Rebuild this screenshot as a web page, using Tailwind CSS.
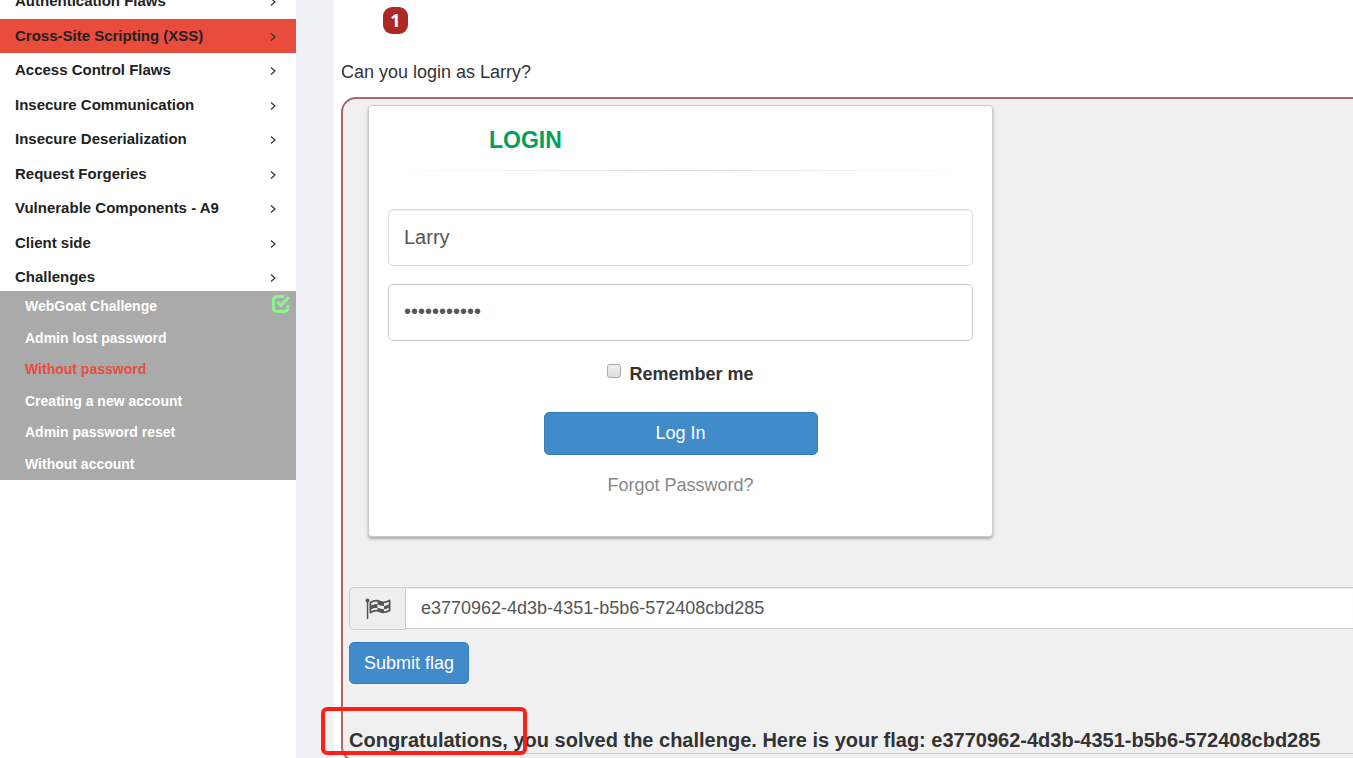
<!DOCTYPE html>
<html lang="en">
<head>
  <meta charset="UTF-8" />
  <meta name="viewport" content="width=device-width, initial-scale=1.0"/>
  <title>WebGoat</title>
  <script src="https://cdn.jsdelivr.net/npm/@tailwindcss/browser@4"></script>
</head>
<body class="bg-[#f0f1f7] text-[#333] text-[18px] font-['Liberation_Sans',Arial,sans-serif] h-screen overflow-hidden flex">

  <!-- Sidebar -->
  <aside class="w-[296px] shrink-0 bg-white overflow-hidden">
    <nav class="-mt-4">
      <ul id="menu" class="h-[310px] flex flex-col justify-between text-[15px] font-bold text-[#222]"></ul>
      <ul id="lessons" class="relative -mt-[3px] h-[189px] bg-[#aaa] flex flex-col text-[14px] font-bold text-white"></ul>
    </nav>
  </aside>

  <!-- Lesson -->
  <main class="ml-[38px] flex-1 min-w-0 bg-white pl-[7px] pt-[7px]">
    <a href="#" class="ml-[42px] w-[25px] h-[27px] rounded-[9px] bg-[#ac2925] text-white font-bold font-['Open_Sans',sans-serif] flex items-center justify-center">1</a>
    <p class="mt-[25px] leading-[26px]">Can you login as Larry?</p>

    <section class="relative mt-3 h-[665px] border-2 border-r-0 border-[#ac6768] rounded-l-[15px] bg-[#f0f0f0] pl-[6px] pt-[6px]">
      <form class="ml-[19px] w-[625px] h-[432px] bg-white border border-[#ccc] rounded-[4px] shadow-[0_2px_3px_#aaa] px-[19px] pt-[19px]">
        <h4 class="pl-[101px] text-[23px] leading-[30px] font-bold text-[#00a05f]">LOGIN</h4>
        <div class="mt-[15px] h-px mx-2 bg-linear-to-r from-transparent via-[#ddd] to-transparent"></div>
        <input type="text" value="Larry" aria-label="Username" class="mt-[38px] block w-full h-[57px] px-[15px] border border-[#ddd] rounded-[5px] text-[20px] text-[#555] shadow-[inset_0_1px_1px_#eee]">
        <input type="password" value="password123" aria-label="Password" class="mt-[18px] block w-full h-[57px] px-[15px] pb-0.5 border border-[#ccc] rounded-[5px] text-[20px] text-[#555]">
        <div class="mt-5 flex justify-center gap-2 leading-[26px]">
          <input id="remember" type="checkbox" class="mt-[3px] appearance-none size-[14px] border border-[#aaa] rounded-[3px] bg-linear-to-b from-[#eee] to-[#ddd]">
          <label for="remember" class="font-bold">Remember me</label>
        </div>
        <button type="button" class="mt-[25px] mx-auto block w-[274px] h-[43px] rounded-[5px] border border-[#357ebd] bg-[#428bca] text-white">Log In</button>
        <a href="#" class="mt-[17px] block text-center leading-[26px] text-[#888]">Forgot Password?</a>
      </form>

      <form class="mt-[50px]">
        <div class="flex h-[43px]">
          <label for="flag" class="w-[57px] border border-[#ccc] rounded-l-[5px] bg-[#eee] flex items-center justify-center" aria-label="Flag">
            <svg class="w-[26px] h-[24px]" viewBox="0 0 26 24" fill="#555">
              <circle cx="2.500" cy="3.500" r="1.900"/>
              <path d="M1.800 3h1.500v19H1.800z"/>
              <path fill="none" stroke="#555" stroke-width="1.800" stroke-linejoin="round" d="M5.400 5.500c3.600-2.300 6.600-2.600 9.600-.9c3 1.500 6 .8 9.600-1.100v10c-3.600 2.200-6.600 2.600-9.600 1c-3-1.500-6-1.200-9.600 1z"/>
              <path d="M5 9.300c3-1.900 5.500-2.300 7.500-1.900v3.600c-2.300-.4-4.800.2-7.500 1.500z"/>
              <path d="M12.500 4c2.500.2 3.800 1.500 6.500 1.600v3.300c-2.700.1-4.500-1.100-6.500-1.500z"/>
              <path d="M12.500 11c2.500.2 4 1.300 6.500 1.300v3c-2.500.3-4.500-1.200-6.500-1.500z"/>
              <path d="M19 8.900c2-.1 3.700-.9 5.500-1.900v3.200c-1.800 1.200-3.500 1.900-5.500 2.100z"/>
            </svg>
          </label>
          <input id="flag" type="text" value="e3770962-4d3b-4351-b5b6-572408cbd285" class="flex-1 min-w-0 h-[42px] px-[15px] border border-l-0 border-r-0 border-[#ccc] bg-white text-[#555] shadow-[inset_0_1px_1px_#eee]">
        </div>
        <button type="button" class="mt-3 w-[120px] h-[42px] rounded-[5px] border border-[#357ebd] bg-[#428bca] text-white">Submit flag</button>
      </form>

      <div class="mt-[43px] border-b border-[#ccc] text-[20px] leading-[26px] font-bold whitespace-nowrap">Congratulations, you solved the challenge. Here is your flag: e3770962-4d3b-4351-b5b6-572408cbd285</div>
      <div class="absolute -left-[22px] top-[608px] w-[206px] h-[48px] border-4 border-[#ff2015] rounded-[6px]"></div>
    </section>
  </main>

  <script>
    const menu = document.getElementById('menu');
    const lessons = document.getElementById('lessons');

    const categories = [
      "Authentication Flaws",
      "Cross-Site Scripting (XSS)",
      "Access Control Flaws",
      "Insecure Communication",
      "Insecure Deserialization",
      "Request Forgeries",
      "Vulnerable Components - A9",
      "Client side",
      "Challenges",
    ];

    categories.forEach((name) => {
      const li = document.createElement('li');
      const active = name === "Cross-Site Scripting (XSS)";
      li.innerHTML = `<a href="#" class="h-[34px] pt-px pl-[15px] pr-5 flex items-center justify-between">${name}
        <svg class="mt-px w-[6px] h-[8px]" viewBox="0 0 6 8" fill="none" stroke="#333" stroke-width="1.2"><path d="M1 .5l4 3.500-4 3.500"/></svg></a>`;
      if (active) li.classList.add('bg-[#e84c3d]');
      menu.appendChild(li);
    });

    const items = [
      { name: "WebGoat Challenge", solved: true },
      { name: "Admin lost password" },
      { name: "Without password", active: true },
      { name: "Creating a new account" },
      { name: "Admin password reset" },
      { name: "Without account" },
    ];

    items.forEach((item) => {
      const li = document.createElement('li');
      li.className = "flex-1 pl-[25px] pr-[6px] flex justify-between leading-[30px]";
      li.innerHTML = `<a href="#">${item.name}</a>`;
      if (item.active) li.classList.add('text-[#e84c3d]');
      if (item.solved) {
        li.innerHTML += `<svg class="mt-1 w-[18px] h-[18px]" viewBox="0 0 18 18" fill="none" stroke="#86f98a" stroke-width="2.8"><path d="M12 1.500H5a3.500 3.500 0 0 0-3.500 3.500v8a3.500 3.500 0 0 0 3.500 3.500h7.500a3.500 3.500 0 0 0 3.500-3.500V10"/><path d="M5.500 7l3.500 3.500L17 2"/></svg>`;
      }
      lessons.appendChild(li);
    });
  </script>
</body>
</html>
